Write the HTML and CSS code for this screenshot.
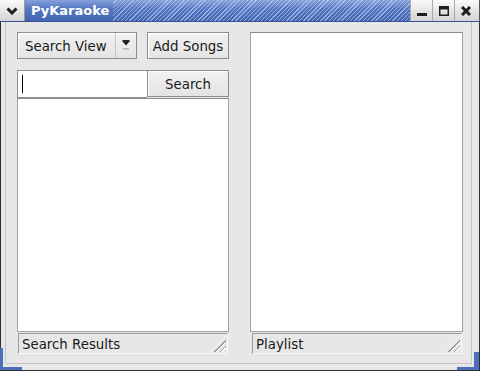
FILE: index.html
```html
<!DOCTYPE html>
<html lang="en">
<head>
<meta charset="UTF-8" />
<meta name="viewport" content="width=device-width, initial-scale=1.0"/>
<title>PyKaraoke</title>
<link rel="stylesheet" href="styles.css">
</head>
<body>
<div class="window">
    <div class="titlebar">
        <div class="wm-btn menu-btn">
            <svg width="12" height="8" viewBox="0 0 12 8"><polyline points="1.5,1.5 6,6 10.5,1.5" fill="none" stroke="#1e1e1e" stroke-width="3"/></svg>
        </div>
        <div class="title">PyKaraoke</div>
        <div class="title-stripes"></div>
        <div class="wm-btn">
            <svg width="10" height="10" viewBox="0 0 10 10"><rect x="0" y="7" width="10" height="3" fill="#1e1e1e"/></svg>
        </div>
        <div class="wm-btn">
            <svg width="10" height="10" viewBox="0 0 10 10"><path d="M0 0H10V10H0Z M1.5 3.5V8.5H8.5V3.5Z" fill="#1e1e1e" fill-rule="evenodd"/></svg>
        </div>
        <div class="wm-btn close-btn">
            <svg width="10" height="10" viewBox="0 0 10 10"><path d="M1 1L9 9M9 1L1 9" stroke="#1e1e1e" stroke-width="3"/></svg>
        </div>
    </div>
    <div class="frame">
        <div class="client">
            <div class="pane pane-left">
                <div class="toolbar">
                    <div class="combo">
                        <span class="combo-label">Search View</span>
                        <span class="combo-arrow">
                            <svg width="8" height="11" viewBox="0 0 8 11"><path d="M0.5 0H7.5V1.5L4 5.5L0.5 1.5Z" fill="#222"/><rect x="1" y="8" width="6" height="1.5" fill="#b4b4b4"/></svg>
                        </span>
                    </div>
                    <button class="btn btn-add">Add Songs</button>
                </div>
                <div class="search-row">
                    <div class="entry"><span class="caret"></span></div>
                    <button class="btn btn-search">Search</button>
                </div>
                <div class="list list-results"></div>
                <div class="status status-left">Search Results<span class="grip"></span></div>
            </div>
            <div class="pane pane-right">
                <div class="list list-playlist"></div>
                <div class="status status-right">Playlist<span class="grip"></span></div>
            </div>
        </div>
    </div>
    <span class="corner corner-bl"></span>
    <span class="corner corner-br"></span>
</div>
</body>
</html>
```

FILE: styles.css
```css
* {
    box-sizing: border-box;
}
body {
    margin: 0;
    background-color: #fff;
    font-family: 'DejaVu Sans', 'Liberation Sans', sans-serif;
    font-size: 13.33px;
    color: #1a1a1a;
}
.window {
    position: relative;
    width: 480px;
    height: 371px;
    display: flex;
    flex-direction: column;
    background-color: #e7e7e7;
}

/* title bar */
.titlebar {
    height: 22px;
    display: flex;
    align-items: stretch;
    background: linear-gradient(#86a0da, #5577c2 40%, #4265b2);
    border-bottom: 1px solid #36539a;
}
.wm-btn {
    flex: 0 0 22px;
    border-left: 1px solid #a9a9a9;
    background: linear-gradient(#fafafa, #e2e2e2 60%, #d4d4d4);
    display: flex;
    align-items: center;
    justify-content: center;
}
.menu-btn {
    flex-basis: 25px;
    border-left: none;
    border-right: 1px solid #9a9a9a;
    padding-top: 1px;
}
.close-btn {
    flex-basis: 26px;
    padding-right: 3px;
    border-right: 1px solid #555;
}
.title {
    flex: none;
    color: #fff;
    font-weight: bold;
    font-size: 13px;
    padding: 0 4px 0 6px;
    line-height: 21px;
}
.title-stripes {
    flex: 1;
    background: repeating-linear-gradient(135deg, rgba(255,255,255,0) 0 2px, rgba(200,214,245,0.6) 2px 3px);
}

/* window frame */
.frame {
    flex: 1;
    display: flex;
    border: 1px solid #2e2e2e;
    border-top: none;
    padding: 0 7px 6px 4px;
    background-color: #e7e7e7;
}
.client {
    flex: 1;
    display: flex;
    gap: 21px;
    padding: 10px 8px 9px 11px;
    border: 1px solid #c4c4c4;
    border-top: none;
}
.pane {
    display: flex;
    flex-direction: column;
}
.pane-left {
    width: 212px;
}
.pane-right {
    width: 213px;
}

/* buttons */
.btn {
    font-family: inherit;
    font-size: 13.33px;
    color: #1a1a1a;
    border: 1px solid #8e8e8e;
    background: linear-gradient(#f1f1f1, #e4e4e4);
    box-shadow: inset 1px 1px 0 #fff;
    padding: 2px 0 0;
    margin: 0;
}
.toolbar {
    display: flex;
    gap: 10px;
    height: 27px;
}
.combo {
    width: 120px;
    display: flex;
    border: 1px solid #8e8e8e;
    background: linear-gradient(#f1f1f1, #e4e4e4);
    box-shadow: inset 1px 1px 0 #fff;
}
.combo-label {
    flex: 1;
    padding: 2px 0 0 7px;
    line-height: 23px;
    border-right: 1px solid #c6c6c6;
}
.combo-arrow {
    width: 20px;
    display: flex;
    justify-content: center;
    padding-top: 7px;
}
.btn-add {
    width: 82px;
}
.search-row {
    display: flex;
    height: 28px;
    margin-top: 11px;
}
.entry {
    width: 130px;
    background-color: #fff;
    border: 1px solid #8e8e8e;
    border-right: none;
    padding: 4px 0 0 4px;
}
.caret {
    display: block;
    width: 1px;
    height: 18px;
    background-color: #000;
}
.btn-search {
    width: 82px;
    height: 27px;
}

/* lists and status bars */
.list {
    background-color: #fff;
    border: 1px solid #a2a2a2;
    border-top-color: #8c8c8c;
}
.list-results {
    height: 234px;
}
.list-playlist {
    height: 300px;
}
.status {
    position: relative;
    height: 21px;
    margin-top: 1px;
    padding: 2px 0 0 3px;
    line-height: 18px;
    border: 1px solid #fafafa;
    border-top-color: #9a9a9a;
    border-left-color: #9a9a9a;
    background-color: #e7e7e7;
}
.status-left {
    margin-left: 1px;
    margin-right: 1px;
}
.status-right {
    margin-left: 2px;
    margin-right: 1px;
}
.grip {
    position: absolute;
    right: 1px;
    bottom: 1px;
    width: 16px;
    height: 16px;
    background: repeating-linear-gradient(135deg, transparent 0 2px, #9a9a9a 2px 3px, #fff 3px 4px);
    clip-path: polygon(100% 0, 100% 100%, 0 100%);
}

/* resize corners of the frame */
.corner {
    position: absolute;
    border: 0 solid #4d6fbb;
}
.corner-bl {
    left: 0;
    bottom: 1px;
    width: 22px;
    height: 22px;
    border-left-width: 3px;
    border-bottom-width: 3px;
}
.corner-br {
    right: 1px;
    bottom: 1px;
    width: 22px;
    height: 18px;
    border-right-width: 5px;
    border-bottom-width: 3px;
}
```
